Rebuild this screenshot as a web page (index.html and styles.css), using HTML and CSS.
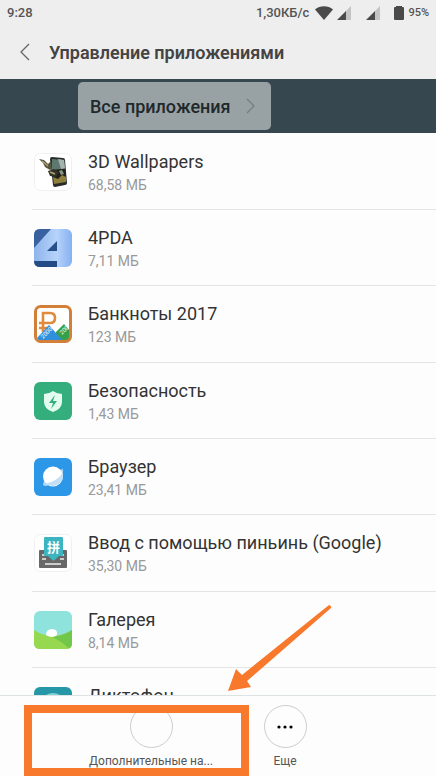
FILE: index.html
```html
<!DOCTYPE html>
<html lang="ru">
<head>
  <meta charset="UTF-8">
  <meta name="viewport" content="width=device-width, initial-scale=1.0">
  <title>Управление приложениями</title>
  <link rel="stylesheet" href="styles.css">
</head>
<body>
  <header class="header">
    <div class="status-bar">
      <span class="time">9:28</span>
      <span class="speed">1,30КБ/с</span>
      <svg class="wifi" width="18" height="14" viewBox="0 0 18 14"><path d="M0 3.5C5-.8 13-.8 18 3.5L9 14z" fill="#4a4a4a"/></svg>
      <svg class="signal" width="14" height="14" viewBox="0 0 14 14"><path d="M9 5l5-5v14H9z" fill="#c4c4c4"/><path d="M0 14l9-9v9z" fill="#4a4a4a"/></svg>
      <svg class="signal" width="14" height="14" viewBox="0 0 14 14"><path d="M9 5l5-5v14H9z" fill="#c4c4c4"/><path d="M0 14l9-9v9z" fill="#4a4a4a"/></svg>
      <svg class="battery" width="10" height="14" viewBox="0 0 10 14"><path d="M2 0h6v1h1q1 0 1 1v11q0 1-1 1H1q-1 0-1-1V2q0-1 1-1h1z" fill="#4a4a4a"/></svg>
      <span class="percent">95%</span>
    </div>
    <div class="title-bar">
      <button class="back" aria-label="Назад">
        <svg width="10" height="18" viewBox="0 0 10 18"><path d="M9 1L1 9l8 8" fill="none" stroke="#666" stroke-width="1.3"/></svg>
      </button>
      <h1>Управление приложениями</h1>
    </div>
  </header>

  <div class="filter-bar">
    <button class="filter">
      Все приложения
      <svg width="9" height="16" viewBox="0 0 9 16"><path d="M1 1l7 7-7 7" fill="none" stroke="#737d81" stroke-width="1.2"/></svg>
    </button>
  </div>

  <ul class="apps">
    <li class="app">
      <svg class="app-icon" viewBox="0 0 38 38">
        <rect x=".5" y=".5" width="37" height="37" rx="6" fill="#fff" stroke="#f0f0f0"/>
        <path d="M18 4l11 1q2 0 2 2l2 23q0 2-2 2l-10 2q-2 0-2-2L16 6q0-2 2-2z" fill="#292b2a"/>
        <path d="M18 6l12 1 1 9-13 1z" fill="#5f786f"/>
        <path d="M24 6l6 1 1 8-4 1z" fill="#a3b5ae"/>
        <path d="M19 17l12-1 1 13-12 2z" fill="#20211b"/>
        <path d="M19 24l5 2 4-4 4 2v5l-12 2z" fill="#8f7f3c"/>
        <path d="M25 18l3-1 2 4-3 1z" fill="#8b9486"/>
        <path d="M5 6l5 1 4 4 3-3 1 8-2 1-5-3-2-4z" fill="#55543c"/>
        <path d="M14 18l6-2 5 3-3 5-6-1z" fill="#303325"/>
        <path d="M8 8l6 5M16 19l5 2" stroke="#b3a27e" stroke-width="1.4"/>
      </svg>
      <div class="app-text">
        <div class="app-name">3D Wallpapers</div>
        <div class="app-size">68,58 МБ</div>
      </div>
    </li>
    <li class="app">
      <svg class="app-icon" viewBox="0 0 38 38">
        <defs>
          <linearGradient id="pda" x1="0" y1="0" x2="1" y2="0">
            <stop offset="0" stop-color="#8fb4ec"/>
            <stop offset=".6" stop-color="#b6d3fa"/>
            <stop offset="1" stop-color="#86b1f1"/>
          </linearGradient>
        </defs>
        <rect width="38" height="38" rx="6" fill="url(#pda)"/>
        <path d="M6 0h11L0 19V6q0-6 6-6z" fill="#39609f"/>
        <path d="M13 22l10-10v10z" fill="#274f8c"/>
        <path d="M0 32h23v6H6q-6 0-6-6z" fill="#244b86"/>
      </svg>
      <div class="app-text">
        <div class="app-name">4PDA</div>
        <div class="app-size">7,11 МБ</div>
      </div>
    </li>
    <li class="app">
      <svg class="app-icon" viewBox="0 0 38 38">
        <rect x="1.500" y="1.500" width="35" height="35" rx="5" fill="#fff"/>
        <path d="M9 27V8h7q5 0 5 5t-5 5H5M5 23h11" fill="none" stroke="#e08a3c" stroke-width="2.600"/>
        <path d="M22 27l8-8 6 7v10H22z" fill="#34a04b"/>
        <path d="M3 33l12-13 14 16H5z" fill="#2f8fdc"/>
        <text x="9" y="34" transform="rotate(-45 9 34)" class="note">2000</text>
        <text x="28" y="30" transform="rotate(-45 28 30)" class="note">200</text>
        <rect x="1.500" y="1.500" width="35" height="35" rx="5" fill="none" stroke="#d37f38" stroke-width="3"/>
      </svg>
      <div class="app-text">
        <div class="app-name">Банкноты 2017</div>
        <div class="app-size">123 МБ</div>
      </div>
    </li>
    <li class="app">
      <svg class="app-icon" viewBox="0 0 38 38">
        <rect width="38" height="38" rx="6" fill="#34ae7c"/>
        <path d="M19 9q4 3 9 3v8q0 7-9 10-9-3-9-10v-8q5 0 9-3z" fill="#e4fbf0"/>
        <path d="M21 13l-6 8h4l-2 6 6-8h-4z" fill="#34ae7c"/>
      </svg>
      <div class="app-text">
        <div class="app-name">Безопасность</div>
        <div class="app-size">1,43 МБ</div>
      </div>
    </li>
    <li class="app">
      <svg class="app-icon" viewBox="0 0 38 38">
        <rect width="38" height="38" rx="6" fill="#2c97e6"/>
        <path d="M9 27q0-2 2-6l17-10q2 3-1 7L15 27q-4 2-6 0z" fill="#a9d5f6"/>
        <circle cx="19" cy="18.500" r="10" fill="#fff"/>
        <path d="M29 10q1 5-5 10t-13 5q8 6 15 0 5-6 2-12z" fill="#c3e0f7"/>
      </svg>
      <div class="app-text">
        <div class="app-name">Браузер</div>
        <div class="app-size">23,41 МБ</div>
      </div>
    </li>
    <li class="app">
      <svg class="app-icon" viewBox="0 0 38 38">
        <rect x=".5" y=".5" width="37" height="37" rx="6" fill="#fff" stroke="#f0f0f0"/>
        <rect x="5" y="16" width="28" height="18" rx="1" fill="#686868"/>
        <path d="M8 21h3M27 21h3M8 25h4M26 25h4M11 30h16" stroke="#ccc" stroke-width="2"/>
        <path d="M11 3h17q1 0 1 1v17q0 1-1 1h-3l-5.500 5-5.500-5h-3q-1 0-1-1V4q0-1 1-1z" fill="#3bb5c0"/>
        <text x="13" y="18" class="pin">拼</text>
      </svg>
      <div class="app-text">
        <div class="app-name">Ввод с помощью пиньинь (Google)</div>
        <div class="app-size">35,30 МБ</div>
      </div>
    </li>
    <li class="app">
      <svg class="app-icon" viewBox="0 0 38 38">
        <rect width="38" height="38" rx="6" fill="#8ee3dd"/>
        <path d="M0 19q9 6 18 6h2q10-1 18-6v13q0 6-6 6H6q-6 0-6-6z" fill="#96d84f"/>
        <path d="M18 26q11-1 20-7v13q0 4-3 5.500Q27 30 18 26z" fill="#72c64a"/>
        <path d="M12 24q0-6 6-6t5 6q-5 4-11 0z" fill="#fff"/>
      </svg>
      <div class="app-text">
        <div class="app-name">Галерея</div>
        <div class="app-size">8,14 МБ</div>
      </div>
    </li>
    <li class="app">
      <svg class="app-icon" viewBox="0 0 38 38">
        <rect width="38" height="38" rx="6" fill="#2697a7"/>
        <circle cx="19" cy="19" r="12" fill="none" stroke="#7fd0d8" stroke-width="2"/>
      </svg>
      <div class="app-text">
        <div class="app-name">Диктофон</div>
        <div class="app-size">1,20 МБ</div>
      </div>
    </li>
  </ul>

  <footer class="toolbar">
    <button class="action">
      <span class="circle"></span>
      Дополнительные на...
    </button>
    <button class="action">
      <span class="circle">
        <svg width="16" height="4" viewBox="0 0 16 4"><circle cx="2" cy="2" r="1.600"/><circle cx="8" cy="2" r="1.600"/><circle cx="14" cy="2" r="1.600"/></svg>
      </span>
      Еще
    </button>
    <div class="highlight"></div>
    <svg class="arrow" width="104" height="88" viewBox="0 0 104 88"><path d="M0 87L8 65l6 6L101 1q3 1 2 3L19 77l4 6z" fill="#f8782c"/></svg>
  </footer>
</body>
</html>
```
FILE: styles.css
```css
* {
  box-sizing: border-box;
}

body {
  display: flex;
  flex-direction: column;
  height: 100vh;
  margin: 0;
  overflow: hidden;
  background-color: #fdfdfd;
  color: #333;
  font-family: Roboto, "Noto Sans CJK SC", sans-serif;
}

button {
  background: none;
  border: none;
  color: inherit;
  cursor: pointer;
  font-family: inherit;
  padding: 0;
}

svg {
  display: block;
  flex-shrink: 0;
}

.header {
  background-color: #eee;
  flex-shrink: 0;
}

.status-bar {
  display: flex;
  align-items: center;
  height: 25px;
  padding: 0 7px;
  color: #555;
  font-size: 13px;
  font-weight: 500;
}

.time {
  margin-right: auto;
}

.wifi {
  margin-left: 6px;
}

.signal {
  margin-left: 4px;
}

.signal + .signal {
  margin-left: 15px;
}

.battery {
  margin: 0 4px 0 14px;
}

.percent {
  font-size: 11px;
}

.title-bar {
  display: flex;
  align-items: center;
  height: 54px;
  padding-left: 20px;
}

.back {
  margin-right: 19px;
}

h1 {
  margin: 0;
  color: #444;
  font-size: 18px;
  font-weight: 600;
}

.filter-bar {
  flex-shrink: 0;
  padding: 3px 78px;
  background-color: #37474f;
}

.filter {
  display: flex;
  align-items: center;
  gap: 15px;
  height: 48px;
  padding: 0 16px 0 12px;
  background-color: #98a2a5;
  border-radius: 5px;
  color: #1f282b;
  font-size: 18px;
  font-weight: 500;
}

.apps {
  flex: 1;
  min-height: 0;
  margin: 0;
  padding: 1px 0 0 32px;
  overflow: hidden;
  list-style: none;
}

.app {
  display: flex;
  align-items: center;
  gap: 16px;
  height: 76px;
  padding-left: 2px;
  border-bottom: 1px solid #e4e4e4;
}

.app:nth-child(3n) {
  height: 77px;
}

.app-icon {
  width: 38px;
  height: 38px;
}

.app-text {
  padding-top: 2px;
}

.app-name {
  font-size: 18px;
  line-height: 24px;
}

.app-size {
  color: #999;
  font-size: 14px;
  line-height: 22px;
}

.note {
  fill: #fff;
  font-size: 6px;
}

.pin {
  fill: #fff;
  font-size: 13px;
  font-weight: 700;
}

.toolbar {
  position: relative;
  display: flex;
  justify-content: center;
  flex-shrink: 0;
  height: 81px;
  padding-top: 9px;
  background-color: #fdfdfd;
  border-top: 1px solid #dde2e2;
}

.action {
  display: flex;
  flex-direction: column;
  align-items: center;
  gap: 4px;
  width: 134px;
  color: #555;
  font-size: 12px;
  line-height: 18px;
  white-space: nowrap;
}

.circle {
  display: flex;
  align-items: center;
  justify-content: center;
  width: 43px;
  height: 43px;
  border: 1px solid #ccc;
  border-radius: 50%;
}

/* callout over the first action */
.highlight {
  position: absolute;
  top: 9px;
  bottom: 0;
  left: 24px;
  width: 225px;
  border: 8px solid #f8782c;
  pointer-events: none;
}

.arrow {
  position: absolute;
  bottom: 84px;
  left: 228px;
}
```
